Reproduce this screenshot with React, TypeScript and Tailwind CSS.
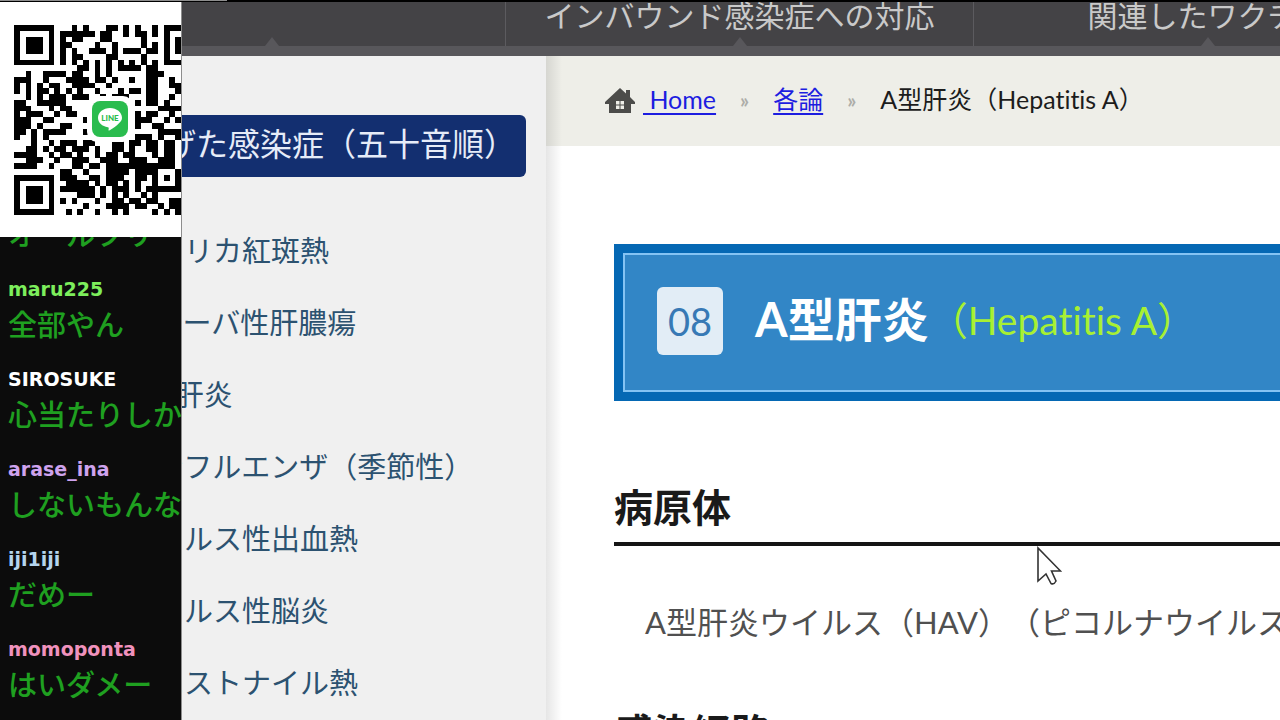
const qrRows = [
  "#######...#.#...##.#.#..#.###",
  "#.....#.######.##..#.##.#.#..",
  "#.###.#.#.##...##.....#...#.#",
  "#.###.#.##....#..#....#.#.#.#",
  "#.###.#.#.#..###.#.###.##.#.#",
  "#.....#.#.##....##....#...#..",
  "#######.#.#.#.#.#.#.#.#.#.###",
  "...........##.#.#.####.##....",
  "..#..####.##..#.#......###...",
  "###..#...####.##.#..#..##..#.",
  "#.#.#.##..####..#......##..##",
  "#.#.##.#.#.#..#...#.##.##...#",
  "..#.#.###.###..#.###...##..#.",
  "##..#####.......###..#.##.#..",
  "###...#.##...............####",
  "#.###..#.##..........#.##..#.",
  "###..##.....#........###..#.#",
  "###.#...##...........#..##...",
  "##.#.####...#............####",
  "#..#.#...............###.#..#",
  "...#..#.###.##...##.##.##.##.",
  "..##.#.##.###.#..##.#..##.##.",
  "####..#.##.#..#.##.##...#.##.",
  "..###..#..###..###..###..###.",
  "####..#...##.##.############.",
  "........##..#...####.####...#",
  "#######.###..##.###..##.#.#.#",
  "#.....#..####.#.##.#.#..#...#",
  "#.###.#.######.#.###.#.######",
  "#.###.#....###.#.#.#..#.#....",
  "#.###.#.#.#...#..##.##.##..##",
  "#.....#.....#...####.##..#.##",
  "#######..#.#..#..#.#....#.#.#",
];

function QrCode() {
  return (
    <div className="relative grid h-[235px] shrink-0 items-center overflow-hidden bg-white pl-[14px]">
      <svg viewBox="0 0 29 33" className="h-[190px] w-[167px]" role="img" aria-label="QR" shapeRendering="crispEdges">
        {qrRows.map((row, y) =>
          [...row].map((cell, x) =>
            cell === "#" ? <rect key={`${x}-${y}`} x={x} y={y} width="1.02" height="1.02" fill="#000" /> : null,
          ),
        )}
      </svg>
      <div className="absolute top-[94px] left-[87px] grid size-[46px] place-items-center rounded-[10px] bg-white">
        <div className="relative grid size-9 place-items-center rounded-lg bg-[#2abc4e]">
          <svg viewBox="0 0 36 36" className="absolute inset-0 size-9" aria-hidden="true">
            <path
              d="M18 7C11.4 7 6 11.3 6 16.7c0 4.8 4.2 8.7 9.9 9.5.9.2 1 .6.8 1.4l-.2 1.3c-.1.5.2.8.8.5 3-1.5 7.3-4.4 9.9-7.3 1.9-1.7 2.8-3.5 2.8-5.4C30 11.3 24.6 7 18 7z"
              fill="#fff"
            />
          </svg>
          <span className='relative pb-[3px] font-["Lato",sans-serif] text-[8px] leading-none font-black text-[#2abc4e]'>
            LINE
          </span>
        </div>
      </div>
    </div>
  );
}

const messages = [
  { name: "hiro", color: "text-[#dddddd]", text: "オールフリー" },
  { name: "maru225", color: "text-[#7dee5c]", text: "全部やん" },
  { name: "SIROSUKE", color: "text-white", text: "心当たりしか" },
  { name: "arase_ina", color: "text-[#cfa3ee]", text: "しないもんな" },
  { name: "iji1iji", color: "text-[#b5d5ee]", text: "だめー" },
  { name: "momoponta", color: "text-[#f092bd]", text: "はいダメー" },
];

function StreamOverlay() {
  return (
    <aside className="absolute top-[2px] bottom-0 left-0 flex w-[182px] flex-col border-r border-[#8d8d8d] bg-[#0c0c0c]">
      <QrCode />
      <ul className="flex min-h-0 flex-1 flex-col justify-end gap-[22px] overflow-hidden pb-[18px] pl-2">
        {messages.map((m) => (
          <li key={m.name} className="shrink-0 whitespace-nowrap">
            <p className={`font-["DejaVu_Sans",sans-serif] text-[19px] leading-[30px] font-bold ${m.color}`}>{m.name}</p>
            <p className='font-["Noto_Sans_CJK_JP",sans-serif] text-[29px] leading-[38px] font-medium text-[#1fa020]'>
              {m.text}
            </p>
          </li>
        ))}
      </ul>
    </aside>
  );
}

const navItems = ["", "インバウンド感染症への対応", "関連したワクチン"];

function TopNav() {
  return (
    <nav className="flex h-[54px] shrink-0 overflow-hidden border-b-[10px] border-[#58575b] bg-[#444346] pl-[38px]">
      {navItems.map((label, i) => (
        <a
          key={i}
          href="#"
          className="relative flex w-[468px] shrink-0 justify-center border-r border-[#5c5b5f] text-[30px] leading-[26px] whitespace-nowrap text-[#c9c9c9]"
        >
          {label}
          <svg viewBox="0 0 14 9" className="absolute bottom-0 h-[9px] w-[14px]" aria-hidden="true">
            <path d="M7 0 14 9H0z" fill="#58575b" />
          </svg>
        </a>
      ))}
    </nav>
  );
}

const diseases = [
  "アフリカ紅斑熱",
  "アメーバ性肝膿瘍",
  "A型肝炎",
  "インフルエンザ（季節性）",
  "ウイルス性出血熱",
  "ウイルス性脳炎",
  "ウエストナイル熱",
];

function Sidebar() {
  return (
    <div className="w-[546px] shrink-0 bg-[#f0f0f0] pt-[59px] pr-5">
      <h2 className="flex h-[62px] items-center justify-end rounded-md bg-[#132f70] pr-[10px] pb-1 text-[32px] leading-none whitespace-nowrap text-[#e6ecf8]">
        とりあげた感染症（五十音順）
      </h2>
      <ul className="pt-[38px] pl-[126px]">
        {diseases.map((d) => (
          <li key={d} className="flex h-[72px] items-center text-[29px] whitespace-nowrap">
            <a href="#" className="text-[#2c5270]">{d}</a>
          </li>
        ))}
      </ul>
    </div>
  );
}

function HomeIcon() {
  return (
    <svg viewBox="0 0 30 26" className="h-[26px] w-[30px]" aria-hidden="true">
      <path d="M15 1 0 15v2h4v9h22v-9h4v-2l-5-5V3h-4v3.5z" fill="#4c4c4a" />
      <path d="M11 14h3.5v3.5H11zM15.5 14H19v3.5h-3.5zM11 18.5h3.5V22H11zM15.5 18.5H19V22h-3.5z" fill="#eeeee8" />
    </svg>
  );
}

function Content() {
  return (
    <main className="relative min-w-0 flex-1 overflow-hidden bg-white">
      <div className="flex h-[90px] items-center bg-[#eeeee8] pb-[2px] pl-[59px] text-[25px] whitespace-nowrap text-[#1c1c1c]">
        <HomeIcon />
        <a href="#" className="ml-2 text-[#1d1de0] underline underline-offset-4">&nbsp;Home</a>
        <span className="ml-6 text-[20px] font-bold text-[#adada8]">»</span>
        <a href="#" className="ml-6 text-[#1d1de0] underline underline-offset-4">各論</a>
        <span className="ml-6 text-[20px] font-bold text-[#adada8]">»</span>
        <span className="ml-6">A型肝炎（Hepatitis A）</span>
      </div>
      <div className="flex flex-col pt-[98px] pl-[68px] whitespace-nowrap">
        <div className="border-y-[9px] border-l-[9px] border-[#0568b4]">
          <h1 className="flex h-[139px] items-center border-y-2 border-l-2 border-[#84c3f3] bg-[#3286c6] pb-1 pl-8">
            <span className="grid h-[68px] w-[66px] place-items-center rounded-md bg-[#e2edf6] text-[38px] leading-none text-[#3779b5]">
              08
            </span>
            <span className="ml-8 pb-[2px] text-[47px] leading-none font-bold text-white">A型肝炎</span>
            <span className="text-[39px] leading-none text-[#a8f032]">（Hepatitis A）</span>
          </h1>
        </div>
        <h2 className="mt-[72px] border-b-4 border-[#151515] text-[39px] leading-[69px] font-bold text-[#1a1a1a]">
          病原体
        </h2>
        <p className="mt-[55px] pl-[31px] text-[31px] leading-[42px] text-[#505050] [text-spacing-trim:space-all]">
          A型肝炎ウイルス（HAV）（ピコルナウイルス科）
        </p>
        <h2 className="mt-[55px] text-[39px] leading-[69px] font-bold text-[#1a1a1a]">感染経路</h2>
      </div>
      <div className="pointer-events-none absolute inset-y-0 left-0 w-4 bg-linear-to-r from-black/10 to-transparent" />
      <svg viewBox="0 0 26 40" className="absolute top-[490px] left-[490px] h-10 w-[26px]" aria-hidden="true">
        <path d="M2 2v33l8-7 5 9.5q3 1.5 5-2.5l-4.5-10h9z" fill="#fff" stroke="#333" strokeWidth="1.6" />
      </svg>
    </main>
  );
}

export default function App() {
  return (
    <div className='relative flex h-screen flex-col overflow-hidden bg-black font-["Lato","Noto_Sans_CJK_JP",sans-serif] [font-variant-ligatures:none]'>
      <div className="h-[2px] shrink-0">
        <div className="h-px w-[227px] bg-[#8d8d8d]" />
      </div>
      <TopNav />
      <div className="flex min-h-0 flex-1">
        <Sidebar />
        <Content />
      </div>
      <StreamOverlay />
    </div>
  );
}
